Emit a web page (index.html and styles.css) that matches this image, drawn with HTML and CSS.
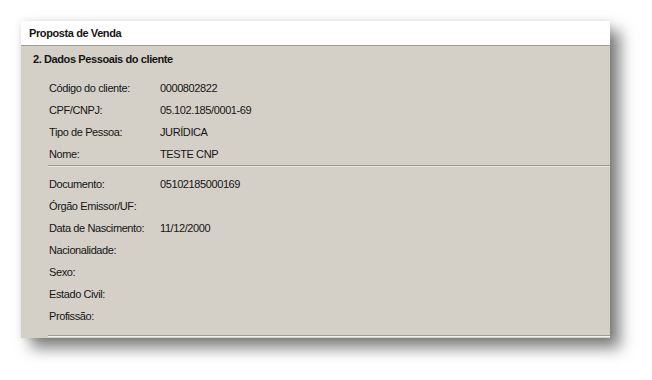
FILE: index.html
```html
<!DOCTYPE html>
<html lang="pt-BR">
<head>
    <meta charset="UTF-8">
    <title>Proposta de Venda</title>
    <link rel="stylesheet" href="styles.css">
</head>
<body>
    <div class="janela">
        <div class="cabecalho">Proposta de Venda</div>

        <div class="conteudo">
            <h2 class="secao">2. Dados Pessoais do cliente</h2>

            <div class="campos">
                <div class="linha"><span class="rotulo">Código do cliente:</span><span class="valor">0000802822</span></div>
                <div class="linha"><span class="rotulo">CPF/CNPJ:</span><span class="valor">05.102.185/0001-69</span></div>
                <div class="linha"><span class="rotulo">Tipo de Pessoa:</span><span class="valor">JURÍDICA</span></div>
                <div class="linha"><span class="rotulo">Nome:</span><span class="valor">TESTE CNP</span></div>
            </div>

            <hr class="divisor">

            <div class="campos">
                <div class="linha"><span class="rotulo">Documento:</span><span class="valor">05102185000169</span></div>
                <div class="linha"><span class="rotulo">Órgão Emissor/UF:</span><span class="valor"></span></div>
                <div class="linha"><span class="rotulo">Data de Nascimento:</span><span class="valor">11/12/2000</span></div>
                <div class="linha"><span class="rotulo">Nacionalidade:</span><span class="valor"></span></div>
                <div class="linha"><span class="rotulo">Sexo:</span><span class="valor"></span></div>
                <div class="linha"><span class="rotulo">Estado Civil:</span><span class="valor"></span></div>
                <div class="linha"><span class="rotulo">Profissão:</span><span class="valor"></span></div>
            </div>

            <hr class="divisor fim">
        </div>
    </div>
</body>
</html>
```

FILE: styles.css
```css
html, body {
    height: 100%;
}
body {
    margin: 0;
    padding: 21px 0 0 21px;
    box-sizing: border-box;
    background: #ffffff;
    font-family: 'Liberation Sans', Arial, sans-serif;
    font-size: 11px;
    color: #151515;
}
.janela {
    width: 589px;
    box-shadow: 10px 10px 14px rgba(0, 0, 0, 0.5), 0 0 7px rgba(0, 0, 0, 0.1);
}
.cabecalho {
    height: 24px;
    line-height: 24px;
    padding-left: 8px;
    background: #ffffff;
    border-bottom: 1px solid #a29e96;
    font-weight: bold;
    letter-spacing: -0.4px;
}
.conteudo {
    background: #d4d0c8;
    padding-bottom: 1px;
}
.secao {
    margin: 0;
    padding: 6px 0 0 12px;
    box-sizing: border-box;
    height: 31px;
    line-height: 15px;
    font-size: 11px;
    font-weight: bold;
    letter-spacing: -0.4px;
}
.campos {
    padding-left: 28px;
}
.linha {
    display: flex;
    height: 22px;
    line-height: 22px;
    letter-spacing: -0.4px;
}
.rotulo {
    width: 111px;
}
.divisor {
    margin: 0 0 6px 27px;
    height: 0;
    border: none;
    border-top: 1px solid #9e9a92;
    border-bottom: 1px solid #ebe9e5;
}
.fim {
    margin-top: 8px;
    margin-bottom: 0;
    border-bottom-color: #f2f1ee;
}
```
